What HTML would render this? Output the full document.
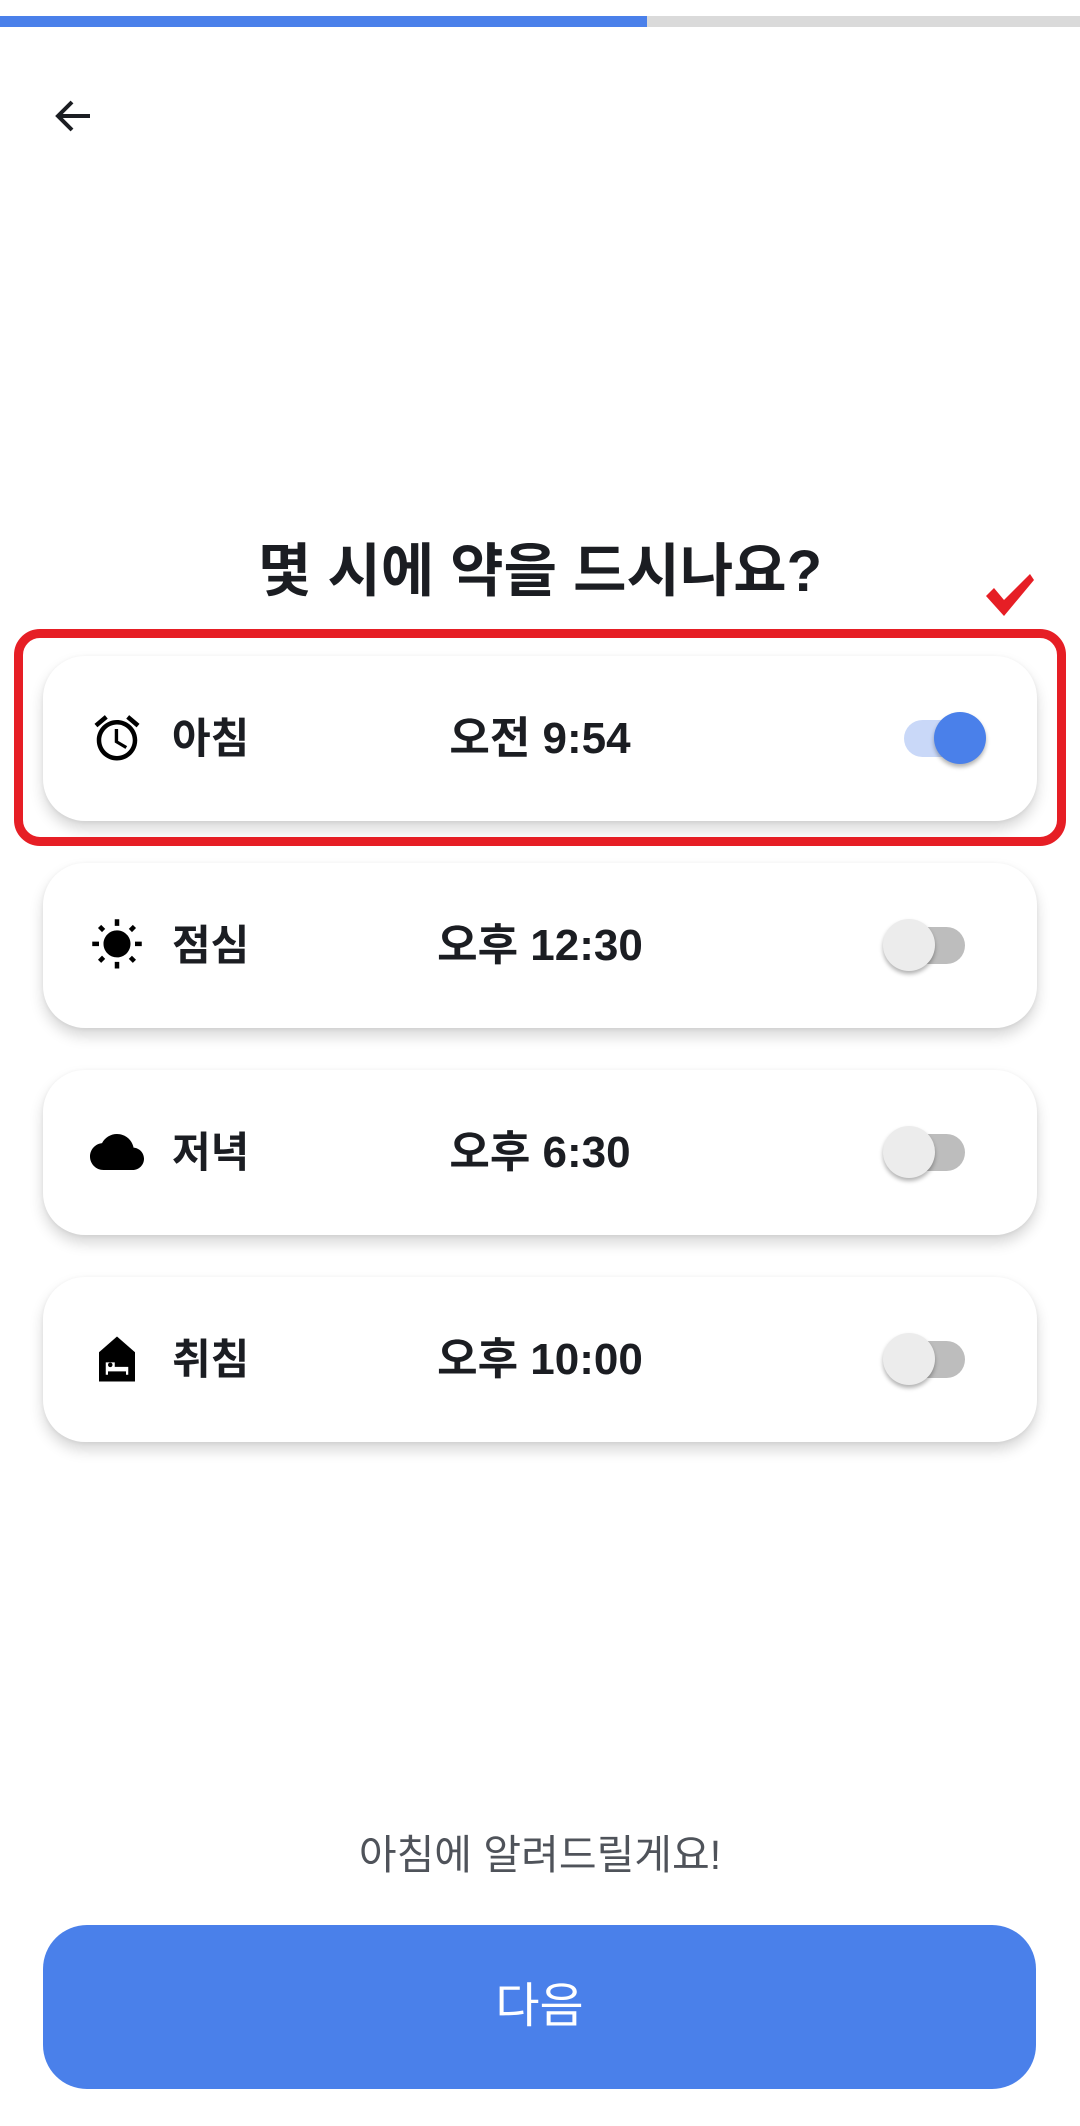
<!DOCTYPE html>
<html><head><meta charset="utf-8"><style>
*{margin:0;padding:0;box-sizing:border-box}
body{width:1080px;height:2126px;background:#fff;position:relative;overflow:hidden;font-family:"Liberation Sans","Noto Sans CJK KR",sans-serif;color:#1b1d22}
.bar{position:absolute;left:0;top:16px;height:11px;width:1080px;background:#dadada}
.bar i{position:absolute;left:0;top:0;height:11px;width:647px;background:#4a80ea}
.title{position:absolute;top:536px;left:0;width:1080px;text-align:center;font-size:58px;font-weight:700;line-height:72px}
.card{position:absolute;left:43px;width:994px;height:165px;background:#fff;border-radius:42px;box-shadow:0 8px 14px rgba(0,0,0,.16),0 1px 4px rgba(0,0,0,.06)}
.icon{position:absolute;left:47px;top:55px;width:54px;height:54px}
.lbl{position:absolute;left:129px;top:0;line-height:165px;font-size:42px;font-weight:700}
.time{position:absolute;left:297px;width:400px;top:0;line-height:165px;text-align:center;font-size:44px;font-weight:700}
.trk{position:absolute;height:37px;border-radius:19px}
.th{position:absolute;width:52px;height:52px;border-radius:50%}
.red{position:absolute;left:14px;top:629px;width:1052px;height:217px;border:9px solid #e61e25;border-radius:26px}
.msg{position:absolute;top:1829px;width:1080px;text-align:center;font-size:41px;color:#4f535a;line-height:52px}
.btn{position:absolute;left:43px;top:1925px;width:993px;height:164px;background:#4a80ea;border-radius:44px;color:#fff;font-size:48px;text-align:center;line-height:164px}
</style></head><body>
<div class="bar"><i></i></div>
<svg style="position:absolute;left:50px;top:92px" width="48" height="48" viewBox="0 0 24 24"><path d="M20 12H5M11 5l-7 7 7 7" fill="none" stroke="#1b1d22" stroke-width="2"/></svg>
<div class="title">몇 시에 약을 드시나요?</div>
<svg style="position:absolute;left:984px;top:572px" width="52" height="46" viewBox="0 0 52 46"><path d="M2 24l8-8 10 12L46 2l4 6-30 36z" fill="#e61e25"/></svg>

<div class="card" style="top:656px">
<svg class="icon" viewBox="0 0 24 24"><path d="M22 5.72l-4.6-3.86-1.29 1.53 4.6 3.86L22 5.72zM7.88 3.39L6.6 1.86 2 5.71l1.29 1.53 4.59-3.85zM12.5 8H11v6l4.75 2.85.75-1.23-4-2.37V8zM12 4c-4.97 0-9 4.030-9 9s4.02 9 9 9 9-4.03 9-9-4.03-9-9-9zm0 16c-3.87 0-7-3.13-7-7s3.13-7 7-7 7 3.13 7 7-3.130 7-7 7z" fill="#000"/></svg>
<div class="lbl">아침</div><div class="time">오전 9:54</div>
<div class="trk" style="left:861px;top:64px;width:72px;background:#c9d8f8"></div>
<div class="th" style="left:891px;top:56px;background:#4a80ea;box-shadow:0 3px 4px rgba(0,0,0,.3)"></div>
</div>

<div class="card" style="top:863px">
<svg class="icon" viewBox="0 0 24 24"><path d="M6.76 4.84l-1.8-1.79-1.41 1.41 1.79 1.79 1.42-1.41zM4 10.5H1v2h3v-2zm9-9.95h-2V3.5h2V.55zm7.45 3.91l-1.41-1.41-1.79 1.79 1.41 1.41 1.79-1.79zm-3.21 13.7l1.79 1.8 1.41-1.41-1.8-1.79-1.4 1.4zM20 10.5v2h3v-2h-3zm-8-5c-3.31 0-6 2.69-6 6s2.69 6 6 6 6-2.69 6-6-2.69-6-6-6zm-1 16.95h2V19.5h-2v2.95zm-7.45-3.91l1.41 1.41 1.79-1.8-1.41-1.41-1.79 1.8z" fill="#000"/></svg>
<div class="lbl">점심</div><div class="time">오후 12:30</div>
<div class="trk" style="left:860px;top:64px;width:62px;background:#bdbdbd"></div>
<div class="th" style="left:840px;top:56px;background:#ececec;box-shadow:0 3px 4px rgba(0,0,0,.3)"></div>
</div>

<div class="card" style="top:1070px">
<svg class="icon" viewBox="0 0 24 24"><path d="M19.35 10.04C18.67 6.59 15.64 4 12 4 9.11 4 6.6 5.64 5.35 8.04 2.34 8.36 0 10.91 0 14c0 3.31 2.690 6 6 6h13c2.76 0 5-2.24 5-5 0-2.64-2.05-4.78-4.65-4.96z" fill="#000"/></svg>
<div class="lbl">저녁</div><div class="time">오후 6:30</div>
<div class="trk" style="left:860px;top:64px;width:62px;background:#bdbdbd"></div>
<div class="th" style="left:840px;top:56px;background:#ececec;box-shadow:0 3px 4px rgba(0,0,0,.3)"></div>
</div>

<div class="card" style="top:1277px">
<svg class="icon" viewBox="0 0 24 24"><path d="M12 2L4 9v13h16V9z" fill="#000"/><path d="M7 13v6h1v-1.5h8V19h1v-3.5h-6v-2H7z" fill="#fff"/><circle cx="9" cy="14.6" r="1" fill="#000"/></svg>
<div class="lbl">취침</div><div class="time">오후 10:00</div>
<div class="trk" style="left:860px;top:64px;width:62px;background:#bdbdbd"></div>
<div class="th" style="left:840px;top:56px;background:#ececec;box-shadow:0 3px 4px rgba(0,0,0,.3)"></div>
</div>

<div class="red"></div>
<div class="msg">아침에 알려드릴게요!</div>
<div class="btn">다음</div>
</body></html>
